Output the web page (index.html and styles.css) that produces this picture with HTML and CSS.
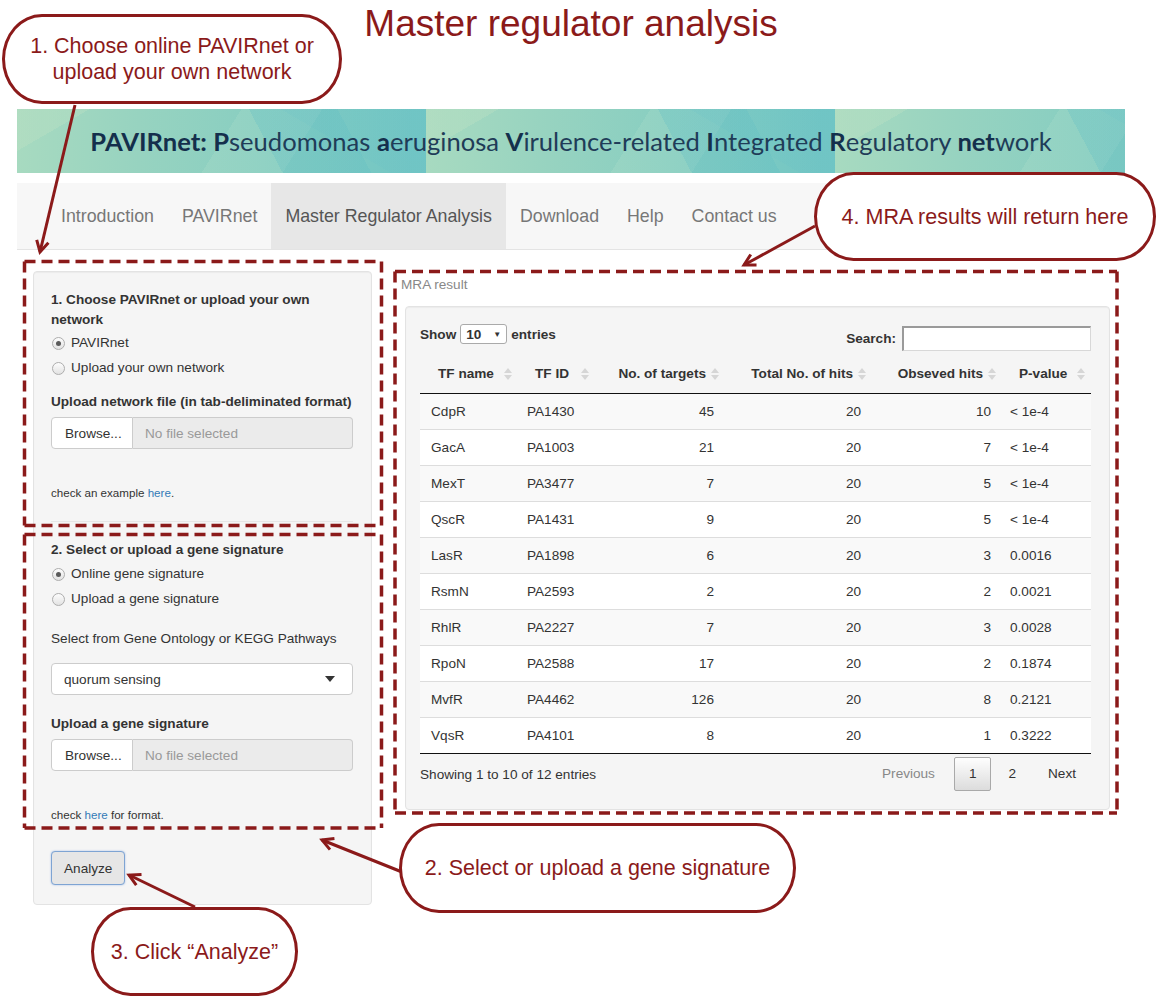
FILE: index.html
```html
<!DOCTYPE html>
<html lang="en">
<head>
<meta charset="utf-8">
<title>Master regulator analysis</title>
<link rel="stylesheet" href="styles.css">
</head>
<body>
<div class="page">
  <div class="container">
    <h1 class="title">Master regulator analysis</h1>
    <div class="banner">
      <p class="banner-text"><b>PAVIRnet: P</b>seudomonas <b>a</b>eruginosa <b>V</b>irulence-related <b>I</b>ntegrated <b>R</b>egulatory <b>net</b>work</p>
    </div>
    <nav class="navbar">
      <ul class="nav">
        <li>Introduction</li>
        <li>PAVIRnet</li>
        <li class="active">Master Regulator Analysis</li>
        <li>Download</li>
        <li>Help</li>
        <li>Contact us</li>
      </ul>
    </nav>
    <div class="main">
      <aside class="well sidebar">
        <p class="sec-title">1. Choose PAVIRnet or upload your own network</p>
        <div class="radios">
          <div class="radio"><span class="radio-dot on"></span><span>PAVIRnet</span></div>
          <div class="radio"><span class="radio-dot"></span><span>Upload your own network</span></div>
        </div>
        <div class="field-label">Upload network file (in tab-deliminated format)</div>
        <div class="file"><span class="file-btn">Browse...</span><span class="file-name">No file selected</span></div>
        <div class="note">check an example <a>here</a>.</div>
        <hr class="sep">
        <p class="sec-title second">2. Select or upload a gene signature</p>
        <div class="radios r2">
          <div class="radio"><span class="radio-dot on"></span><span>Online gene signature</span></div>
          <div class="radio"><span class="radio-dot"></span><span>Upload a gene signature</span></div>
        </div>
        <div class="plain-label">Select from Gene Ontology or KEGG Pathways</div>
        <div class="select"><span>quorum sensing</span><span class="caret"></span></div>
        <div class="field-label f2">Upload a gene signature</div>
        <div class="file"><span class="file-btn">Browse...</span><span class="file-name">No file selected</span></div>
        <div class="note">check <a>here</a> for format.</div>
        <button class="btn-analyze">Analyze</button>
      </aside>
      <section class="results">
        <div class="res-label">MRA result</div>
        <div class="well dt">
          <div class="dt-top">
            <div class="len">Show <span class="len-sel"><span>10</span><span class="mini-caret">&#9660;</span></span> entries</div>
            <div class="search">Search: <span class="search-input"></span></div>
          </div>
          <table class="grid">
            <colgroup><col class="w1"><col class="w2"><col class="w3"><col class="w4"><col class="w5"><col class="w6"></colgroup>
            <thead>
              <tr>
                <th class="l"><div class="th"><span>TF name</span><svg class="sort" width="8" height="14" viewBox="0 0 8 14"><path d="M0 6 4 1 8 6z M0 8 4 13 8 8z"/></svg></div></th>
                <th class="l"><div class="th"><span>TF ID</span><svg class="sort" width="8" height="14" viewBox="0 0 8 14"><path d="M0 6 4 1 8 6z M0 8 4 13 8 8z"/></svg></div></th>
                <th class="r"><div class="th"><span>No. of targets</span><svg class="sort" width="8" height="14" viewBox="0 0 8 14"><path d="M0 6 4 1 8 6z M0 8 4 13 8 8z"/></svg></div></th>
                <th class="r"><div class="th"><span>Total No. of hits</span><svg class="sort" width="8" height="14" viewBox="0 0 8 14"><path d="M0 6 4 1 8 6z M0 8 4 13 8 8z"/></svg></div></th>
                <th class="r"><div class="th"><span>Obseved hits</span><svg class="sort" width="8" height="14" viewBox="0 0 8 14"><path d="M0 6 4 1 8 6z M0 8 4 13 8 8z"/></svg></div></th>
                <th class="l last"><div class="th"><span>P-value</span><svg class="sort" width="8" height="14" viewBox="0 0 8 14"><path d="M0 6 4 1 8 6z M0 8 4 13 8 8z"/></svg></div></th>
              </tr>
            </thead>
            <tbody>
              <tr><td class="c1">CdpR</td><td>PA1430</td><td class="r">45</td><td class="r">20</td><td class="r">10</td><td class="c6">&lt; 1e-4</td></tr>
              <tr><td class="c1">GacA</td><td>PA1003</td><td class="r">21</td><td class="r">20</td><td class="r">7</td><td class="c6">&lt; 1e-4</td></tr>
              <tr><td class="c1">MexT</td><td>PA3477</td><td class="r">7</td><td class="r">20</td><td class="r">5</td><td class="c6">&lt; 1e-4</td></tr>
              <tr><td class="c1">QscR</td><td>PA1431</td><td class="r">9</td><td class="r">20</td><td class="r">5</td><td class="c6">&lt; 1e-4</td></tr>
              <tr><td class="c1">LasR</td><td>PA1898</td><td class="r">6</td><td class="r">20</td><td class="r">3</td><td class="c6">0.0016</td></tr>
              <tr><td class="c1">RsmN</td><td>PA2593</td><td class="r">2</td><td class="r">20</td><td class="r">2</td><td class="c6">0.0021</td></tr>
              <tr><td class="c1">RhlR</td><td>PA2227</td><td class="r">7</td><td class="r">20</td><td class="r">3</td><td class="c6">0.0028</td></tr>
              <tr><td class="c1">RpoN</td><td>PA2588</td><td class="r">17</td><td class="r">20</td><td class="r">2</td><td class="c6">0.1874</td></tr>
              <tr><td class="c1">MvfR</td><td>PA4462</td><td class="r">126</td><td class="r">20</td><td class="r">8</td><td class="c6">0.2121</td></tr>
              <tr><td class="c1">VqsR</td><td>PA4101</td><td class="r">8</td><td class="r">20</td><td class="r">1</td><td class="c6">0.3222</td></tr>
            </tbody>
          </table>
          <div class="dt-foot">
            <div class="info">Showing 1 to 10 of 12 entries</div>
            <div class="pager">
              <span class="pg disabled">Previous</span>
              <span class="pg current">1</span>
              <span class="pg">2</span>
              <span class="pg">Next</span>
            </div>
          </div>
        </div>
      </section>
    </div>
  </div>

  <svg class="annot" width="1156" height="998" viewBox="0 0 1156 998">
    <defs>
      <marker id="ah" markerUnits="userSpaceOnUse" markerWidth="16" markerHeight="16" viewBox="0 0 16 16" refX="13" refY="8" orient="auto">
        <path d="M2 2 L13 8 L2 14" fill="none" stroke="#8b1a1a" stroke-width="3" stroke-linejoin="miter"/>
      </marker>
    </defs>
    <g class="dash">
      <line x1="24.5" y1="261.5" x2="381.5" y2="261.5"/>
      <line x1="381.5" y1="261.5" x2="381.5" y2="525.5"/>
      <line x1="24.5" y1="525.5" x2="381.5" y2="525.5"/>
      <line x1="24.5" y1="261.5" x2="24.5" y2="525.5"/>

      <line x1="24.5" y1="534.5" x2="381.5" y2="534.5"/>
      <line x1="381.5" y1="534.5" x2="381.5" y2="828"/>
      <line x1="24.5" y1="828" x2="381.5" y2="828"/>
      <line x1="24.5" y1="534.5" x2="24.5" y2="828"/>

      <line x1="395" y1="271.5" x2="1117" y2="271.5"/>
      <line x1="1117" y1="271.5" x2="1117" y2="813"/>
      <line x1="395" y1="813" x2="1117" y2="813"/>
      <line x1="395" y1="271.5" x2="395" y2="813"/>
    </g>
    <g class="arrows">
      <line x1="75" y1="105" x2="40" y2="252" marker-end="url(#ah)"/>
      <line x1="815" y1="226" x2="744" y2="265" marker-end="url(#ah)"/>
      <line x1="402" y1="872" x2="322" y2="840" marker-end="url(#ah)"/>
      <line x1="195" y1="907" x2="129" y2="875" marker-end="url(#ah)"/>
    </g>
  </svg>

  <div class="callout co1">1. Choose online PAVIRnet or<br>upload your own network</div>
  <div class="callout co4">4. MRA results will return here</div>
  <div class="callout co2">2. Select or upload a gene signature</div>
  <div class="callout co3">3. Click “Analyze”</div>
</div>
</body>
</html>
```

FILE: styles.css
```css
html, body {
  margin: 0;
  padding: 0;
  background: #fff;
}

body {
  font-family: "Liberation Sans", Arial, sans-serif;
  font-size: 13.6px;
  color: #333;
}

.page {
  position: relative;
  width: 1156px;
  height: 998px;
  overflow: hidden;
}

.container {
  margin: 0 31px 0 17px;
}

.title {
  margin: 0;
  padding-top: 2px;
  height: 44px;
  line-height: 44px;
  font-size: 37px;
  font-weight: normal;
  color: #8b1a1a;
  text-align: center;
}

/* ---------- banner ---------- */
.banner {
  margin-top: 63px;
  height: 64px;
  display: flex;
  align-items: center;
  justify-content: center;
  background-color: #8fd0c0;
  background-image:
    linear-gradient(62deg, transparent 60%, rgba(98, 190, 196, 0.3) 60%, rgba(98, 190, 196, 0.3) 80%, transparent 80%),
    linear-gradient(-58deg, transparent 32%, rgba(255, 255, 225, 0.08) 32%, rgba(255, 255, 225, 0.08) 50%, transparent 50%),
    linear-gradient(150deg, rgba(196, 228, 196, 0.3) 0, rgba(196, 228, 196, 0.3) 14%, transparent 14%),
    linear-gradient(30deg, transparent 72%, rgba(108, 194, 198, 0.25) 72%),
    linear-gradient(90deg, #a7dac0 0%, #97d3c0 30%, #88cec1 60%, #70c5c4 100%);
  background-size: 409px 64px;
  background-repeat: repeat-x;
}

.banner-text {
  margin: 0;
  font-family: Lato, "Open Sans", sans-serif;
  font-size: 25.6px;
  color: #1f3c58;
  white-space: nowrap;
}

.banner-text b {
  font-weight: bold;
  color: #142f4c;
}

/* ---------- navbar ---------- */
.navbar {
  margin-top: 10px;
  height: 66px;
  background: #f7f7f7;
  border-bottom: 1px solid #e4e4e4;
}

.nav {
  list-style: none;
  margin: 0;
  padding: 0 0 0 30px;
  display: flex;
  height: 100%;
}

.nav li {
  display: flex;
  align-items: center;
  padding: 0 14px;
  font-size: 17.8px;
  color: #777;
}

.nav li.active {
  background: #e7e7e7;
  color: #555;
}

/* ---------- main ---------- */
.main {
  display: flex;
  align-items: flex-start;
  margin-top: 21px;
}

.well {
  background: #f5f5f5;
  border: 1px solid #e3e3e3;
  border-radius: 4px;
  box-shadow: inset 0 1px 1px rgba(0, 0, 0, 0.04);
}

.sidebar {
  margin-left: 16px;
  width: 339px;
  box-sizing: border-box;
  padding: 18px 18px 19px 17px;
}

.sec-title {
  margin: 0;
  font-weight: bold;
  line-height: 20px;
}

.sec-title.second {
  margin-top: 18px;
}

.radios {
  margin-top: 3px;
  display: flex;
  flex-direction: column;
  gap: 5px;
}

.radios.r2 {
  margin-top: 4px;
}

.radio {
  display: flex;
  align-items: center;
  gap: 6px;
  line-height: 20px;
}

.radio-dot {
  width: 13px;
  height: 13px;
  box-sizing: border-box;
  margin-left: 1px;
  border: 1px solid #adadad;
  border-radius: 50%;
  background: linear-gradient(#fdfdfd, #e2e2e2);
  display: flex;
  align-items: center;
  justify-content: center;
}

.radio-dot.on::after {
  content: "";
  width: 5px;
  height: 5px;
  border-radius: 50%;
  background: #5a5a5a;
}

.field-label {
  margin-top: 14px;
  font-weight: bold;
  line-height: 20px;
}

.field-label.f2 {
  margin-top: 19px;
}

.file {
  display: flex;
  height: 32px;
  margin-top: 5px;
}

.file-btn {
  width: 82px;
  box-sizing: border-box;
  padding-left: 13px;
  display: flex;
  align-items: center;
  background: #fff;
  border: 1px solid #ccc;
  border-radius: 4px 0 0 4px;
  color: #333;
}

.file-name {
  flex: 1;
  box-sizing: border-box;
  padding-left: 12px;
  display: flex;
  align-items: center;
  background: #ebebeb;
  border: 1px solid #ccc;
  border-left: none;
  border-radius: 0 4px 4px 0;
  color: #999;
}

.note {
  margin-top: 36px;
  font-size: 11.6px;
  line-height: 16px;
}

.note a {
  color: #337ab7;
}

.sep {
  margin: 20px 0 0;
  border: 0;
  border-top: 1px solid #e6e6e6;
  height: 0;
}

.plain-label {
  margin-top: 20px;
  line-height: 20px;
}

.select {
  margin-top: 14px;
  height: 32px;
  box-sizing: border-box;
  padding: 0 17px 0 12px;
  display: flex;
  align-items: center;
  justify-content: space-between;
  background: #fff;
  border: 1px solid #ccc;
  border-radius: 4px;
}

.caret {
  width: 0;
  height: 0;
  border-left: 5px solid transparent;
  border-right: 5px solid transparent;
  border-top: 6px solid #333;
}

.btn-analyze {
  display: block;
  margin-top: 28px;
  height: 34px;
  padding: 0 12px;
  font: inherit;
  color: #333;
  background: #e6e6e6;
  border: 1px solid #7ea4d3;
  border-radius: 4px;
  box-shadow: 0 0 2px rgba(102, 150, 220, 0.6);
}

/* ---------- results ---------- */
.results {
  margin-left: 29px;
  width: 709px;
  padding-top: 6px;
}

.res-label {
  line-height: 16px;
  color: #888;
}

.dt {
  margin-top: 13px;
  margin-left: 4px;
  width: 705px;
  box-sizing: border-box;
  padding: 17px 18px 18px 14px;
}

.dt-top {
  display: flex;
  justify-content: space-between;
  align-items: center;
  height: 26px;
}

.len {
  align-self: flex-start;
  display: flex;
  align-items: center;
  gap: 4px;
  font-weight: bold;
  height: 20px;
}

.len-sel {
  width: 47px;
  height: 20px;
  box-sizing: border-box;
  padding: 0 5px;
  display: flex;
  align-items: center;
  justify-content: space-between;
  background: #fff;
  border: 1px solid #aaa;
  border-radius: 3px;
}

.mini-caret {
  font-size: 8px;
  color: #333;
}

.search {
  display: flex;
  align-items: center;
  gap: 6px;
  font-weight: bold;
  padding-top: 2px;
}

.search-input {
  width: 189px;
  height: 25px;
  box-sizing: border-box;
  background: #fff;
  border-style: solid;
  border-width: 2px 1px 1px 2px;
  border-color: #9a9a9a #d8d8d8 #d8d8d8 #9a9a9a;
}

.grid {
  margin-top: 5px;
  width: 671px;
  table-layout: fixed;
  border-collapse: separate;
  border-spacing: 0;
}

.w1 { width: 97px; }
.w2 { width: 77px; }
.w3 { width: 130px; }
.w4 { width: 147px; }
.w5 { width: 130px; }
.w6 { width: 90px; }

.grid th {
  padding: 9px 5px 9px 18px;
  line-height: 20px;
  text-align: left;
  font-weight: bold;
  border-bottom: 1px solid #111;
  white-space: nowrap;
}

.grid th.last {
  padding-right: 6px;
}

.th {
  display: flex;
  align-items: center;
  justify-content: space-between;
}

.grid th.r .th {
  justify-content: flex-end;
  gap: 5px;
}

.sort {
  fill: #d6d6d6;
  flex: none;
}

.grid td {
  padding: 8px 10px;
  line-height: 19px;
  border-bottom: 1px solid #ddd;
  white-space: nowrap;
}

.grid td.c1 {
  padding-left: 11px;
}

.grid td.c6 {
  padding-left: 9px;
}

.grid td.r {
  text-align: right;
}

.grid tbody tr:nth-child(odd) td {
  background: #f9f9f9;
}

.grid tbody tr:nth-child(even) td {
  background: #fff;
}

.grid tbody tr:last-child td {
  border-bottom-color: #111;
}

.dt-foot {
  margin-top: 3px;
  height: 34px;
  display: flex;
  justify-content: space-between;
  align-items: center;
}

.pager {
  display: flex;
}

.pg {
  height: 34px;
  box-sizing: border-box;
  margin-left: 2px;
  padding: 0 14px;
  line-height: 32px;
  border: 1px solid transparent;
  border-radius: 2px;
  color: #333;
}

.pg.disabled {
  color: #888;
  padding-right: 16px;
}

.pg.current {
  border-color: #a9a9a9;
  background: linear-gradient(#fefefe, #dcdcdc);
}

/* ---------- annotations ---------- */
.annot {
  position: absolute;
  left: 0;
  top: 0;
  pointer-events: none;
}

.dash line {
  stroke: #8b1a1a;
  stroke-width: 3.5;
  stroke-dasharray: 11 6;
}

.arrows line {
  stroke: #8b1a1a;
  stroke-width: 3;
}

.callout {
  position: absolute;
  box-sizing: border-box;
  display: flex;
  align-items: center;
  justify-content: center;
  text-align: center;
  background: #fff;
  border: 3px solid #8b1a1a;
  border-radius: 40px / 45px;
  color: #8b1a1a;
  font-size: 21.5px;
  line-height: 26px;
  white-space: nowrap;
}

.co1 { left: 2px;   top: 14px;  width: 340px; height: 90px; }
.co4 { left: 814px; top: 172px; width: 342px; height: 89px; }
.co2 { left: 399px; top: 823px; width: 397px; height: 90px; }
.co3 { left: 91px;  top: 907px; width: 207px; height: 89px; }
```
